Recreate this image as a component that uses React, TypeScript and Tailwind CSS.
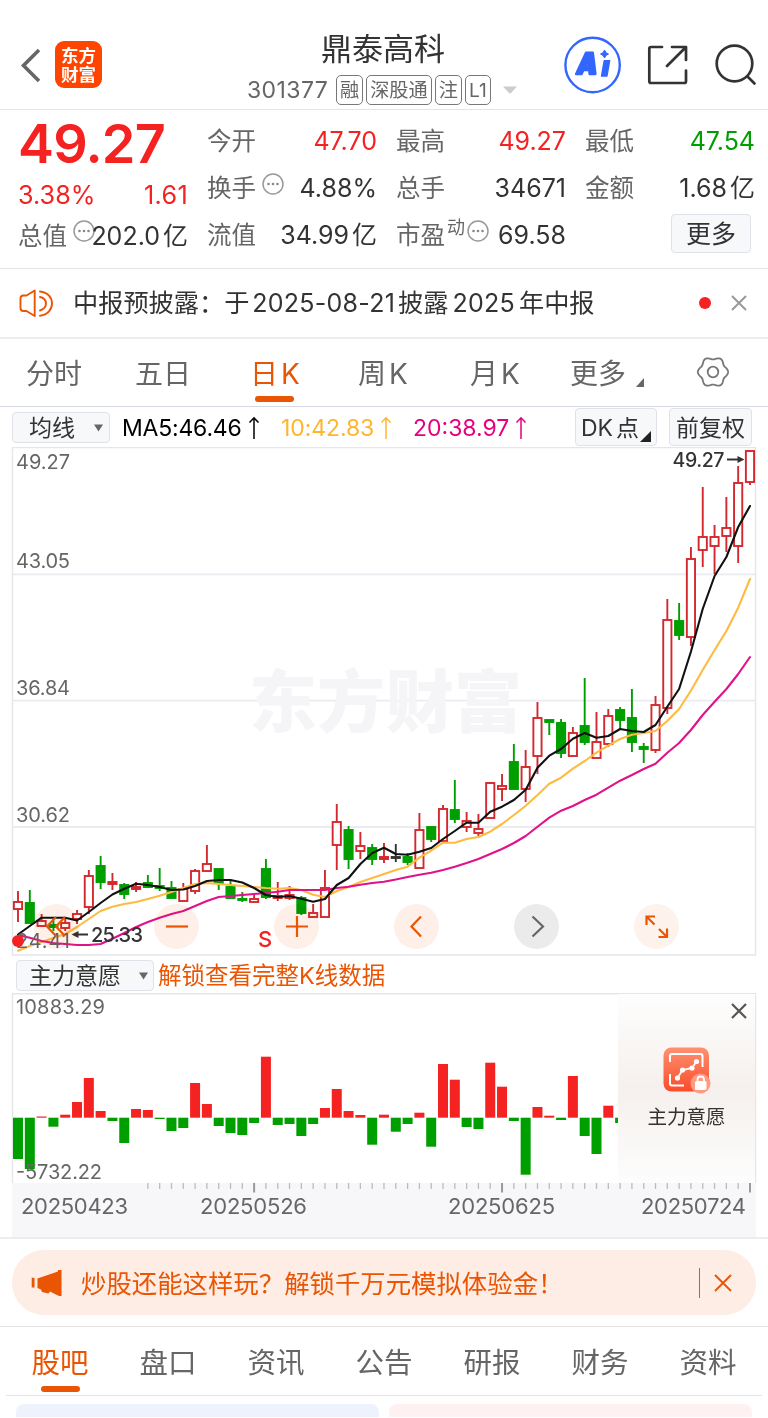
import React, { FC, ReactNode } from 'react'

// x of the first candle and distance between two candles
const X0 = 18
const STEP = 11.806
const ZERO = 1117.7

const cx = (i: number) => X0 + STEP * i

// colour, high, body top, body bottom, low
type Candle = [string, number, number, number, number]

const candles: Candle[] = [
    ['r', 891, 902, 909, 922], ['g', 890, 903, 923, 923], ['r', 914, 921, 926, 926], ['g', 919, 925, 927, 931],
    ['r', 917, 923, 928, 931], ['r', 910, 914, 919, 924], ['r', 870, 876, 907, 914], ['g', 856, 866, 882, 889],
    ['r', 873, 882, 884, 890], ['g', 883, 885, 894, 899], ['r', 882, 887, 889, 892], ['g', 875, 883, 887, 888],
    ['g', 868, 886, 888, 891], ['g', 881, 888, 898, 898], ['r', 883, 889, 901, 901], ['r', 869, 871, 891, 894],
    ['r', 845, 864, 871, 871], ['g', 869, 869, 883, 890], ['g', 881, 887, 898, 898], ['g', 892, 899, 900, 902],
    ['r', 895, 899, 902, 902], ['g', 859, 869, 897, 899], ['r', 882, 896, 898, 901], ['r', 886, 895, 898, 900],
    ['g', 896, 898, 913, 915], ['r', 904, 913, 917, 917], ['r', 870, 888, 917, 917], ['r', 804, 822, 845, 870],
    ['g', 826, 830, 859, 869], ['r', 832, 846, 851, 859], ['g', 844, 848, 859, 865], ['r', 843, 857, 859, 863],
    ['k', 844, 857, 858, 862], ['g', 853, 857, 862, 865], ['r', 813, 830, 868, 868], ['g', 827, 827, 839, 842],
    ['r', 805, 809, 841, 843], ['g', 780, 810, 819, 823], ['r', 812, 821, 827, 832], ['r', 814, 829, 833, 836],
    ['r', 782, 783, 818, 818], ['r', 774, 786, 789, 801], ['g', 744, 762, 789, 789], ['r', 750, 767, 789, 802],
    ['r', 702, 718, 756, 774], ['g', 720, 720, 722, 735], ['g', 719, 723, 753, 758], ['r', 727, 733, 756, 756],
    ['g', 678, 726, 742, 745], ['r', 712, 742, 758, 758], ['r', 709, 716, 744, 747], ['g', 707, 710, 720, 729],
    ['g', 689, 718, 742, 752], ['g', 743, 747, 749, 763], ['r', 696, 705, 750, 753], ['r', 599, 620, 708, 714],
    ['g', 603, 621, 635, 640], ['r', 547, 559, 637, 646], ['r', 487, 537, 550, 567], ['r', 525, 537, 546, 574],
    ['r', 497, 528, 536, 552], ['r', 466, 483, 546, 563], ['r', 450, 451, 482, 485],
]

const ma5 = [
    934.5, 926, 917.7, 917.7, 917.7, 920.5, 912, 903, 894.5, 888.7, 883.7, 885, 887, 890, 889.5, 886, 881, 880, 880, 882.5, 888,
    895, 897, 896, 898.7, 901.7, 899, 885, 878, 864, 853, 847.7, 854, 854.7, 851.7, 848, 839, 831, 822.7, 822.7, 811.7, 806.7,
    800, 789.7, 767.7, 755.7, 749, 738.7, 733, 737.7, 736, 729, 731, 732, 725, 706.7, 689, 651.7, 609, 576, 557, 527, 506]

const ma10 = [
    950.7, 946, 942, 938, 934, 927, 919, 911, 906.7, 904, 902, 899, 895.7, 892, 888, 884, 883, 884, 885, 886, 887,
    888, 888.7, 888, 890, 894.7, 897, 891, 887, 882, 878, 874, 870, 866.7, 857.7, 850.7, 842.7, 842.7, 839, 837, 831.7, 824,
    815, 805.7, 795, 783.7, 777.7, 768.7, 761, 752.7, 745.7, 739, 734.7, 733, 731, 721, 709, 690.7, 670, 650, 631, 607.7, 579]

const ma20 = [
    935, 937.7, 941, 943, 944, 945, 945, 944, 938.7, 933, 927, 922, 917.7, 914, 911, 906, 901, 897, 896, 895, 894,
    893, 891.7, 890, 890, 890, 890, 888, 886.7, 884.7, 883, 881.7, 879.5, 877, 874.7, 872.7, 870, 866.7, 863, 859, 854, 849,
    843, 836, 826.7, 817.7, 810.7, 806, 800, 794.7, 787.7, 780.7, 775, 769, 763.7, 752.7, 743, 730, 715, 701.7, 689, 674, 657]

// end of each volume bar, measured on the same axis as ZERO
const bars = [
    1159, 1169, 1116.5, 1126.7, 1114.7, 1102, 1078, 1111, 1121, 1143, 1109, 1110, 1119, 1131, 1128, 1083, 1104, 1126, 1133,
    1135, 1123, 1056.7, 1125, 1124, 1136, 1124, 1108, 1089, 1111, 1115, 1144.7, 1114.7, 1131.7, 1124, 1112.7, 1146.7, 1064,
    1079.7, 1127, 1129, 1062.7, 1086.7, 1121, 1174.7, 1107, 1115.7, 1120, 1076, 1136, 1154, 1105.7, 1123]

const candleColors: Record<string, string> = { r: '#d3292e', g: '#009f00', k: '#333333' }

const line = (values: number[]) => values.map((y, i) => `${cx(i).toFixed(1)},${y}`).join(' ')

const gearPath = Array.from({ length: 73 }, (_, n) => {
    const a = (n * Math.PI) / 36
    const r = 13.9 + 1.3 * Math.cos(6 * a)
    return `${n ? 'L' : 'M'}${(17 + r * Math.cos(a)).toFixed(2)} ${(17 + r * Math.sin(a)).toFixed(2)}`
}).join('')

const Dots: FC<{ className?: string }> = ({ className = '' }) => (
    <svg viewBox="0 0 22 22" className={`size-[22px] shrink-0 ${className}`}>
        <circle cx="11" cy="11" r="10" fill="none" stroke="#999" strokeWidth="1.5" />
        <circle cx="6.5" cy="11" r="1.3" fill="#888" />
        <circle cx="11" cy="11" r="1.3" fill="#888" />
        <circle cx="15.5" cy="11" r="1.3" fill="#888" />
    </svg>
)

const Tag: FC<{ children: ReactNode }> = ({ children }) => (
    <span className="flex h-[30px] items-center whitespace-nowrap rounded-[5px] border border-[#777] px-[3px] text-[19.2px] text-[#666]">{children}</span>
)

const Header: FC = () => (
    <header className="relative flex h-[110px] border-b border-[#e4e4e4]">
        <div className="flex items-start pl-[20px] pt-[41px]">
            <svg viewBox="0 0 22 40" className="mt-[4px] h-[40px] w-[22px]">
                <path d="M19 5 L3.5 20.5 L19 36" fill="none" stroke="#666" strokeWidth="3.6" />
            </svg>
            <div className="ml-[13px] flex size-[47px] flex-col items-center justify-center rounded-[9px] bg-[#ff4400] text-[17.5px] font-bold leading-[19px] text-white">
                <span>东方</span>
                <span>财富</span>
            </div>
        </div>
        <div className="absolute left-[247px] top-[29px] flex w-[275px] flex-col">
            <h1 className="pl-[74px] text-[31px] leading-[40px] text-[#333]">鼎泰高科</h1>
            <div className="mt-[6px] flex items-center gap-[3px] leading-[28px]">
                <span className="w-[86px] shrink-0 text-[23px] tracking-[0.4px] text-[#666]">301377</span>
                <Tag>融</Tag>
                <Tag>深股通</Tag>
                <Tag>注</Tag>
                <Tag>L1</Tag>
                <svg viewBox="0 0 14 8" className="ml-[9px] h-[8px] w-[14px] shrink-0"><path d="M0 0.5H14L7 8Z" fill="#ccc" /></svg>
            </div>
        </div>
        <svg viewBox="560 30 208 70" className="ml-auto mt-[30px] h-[70px] w-[208px]" fill="none">
            <circle cx="592.6" cy="65" r="27.2" stroke="#3366ff" strokeWidth="2.4" />
            <g fill="#3366ff" stroke="#3366ff" strokeLinejoin="round" fontWeight="900" transform="translate(13.2 0) skewX(-10)">
                <text x="575.5" y="74.5" strokeWidth="2.6" fontSize="29" textLength="20.5" lengthAdjust="spacingAndGlyphs">A</text>
                <text x="600.5" y="76" strokeWidth="1.6" fontSize="28" textLength="8" lengthAdjust="spacingAndGlyphs">ı</text>
            </g>
            <path d="M604.5 50Q605.3 53.2 608.500 54Q605.3 55 604.5 58Q603.7 55 600.5 54Q603.7 53.2 604.5 50Z" fill="#3366ff" stroke="#3366ff" />
            <g stroke="#333" strokeWidth="2.7" strokeLinecap="round" strokeLinejoin="round">
                <path d="M662 47H651Q649.3 47 649.3 48.7V81Q649.3 83 651 83H684.5Q686 83 686 81V70.5" />
                <path d="M672 47H686V60M667 66L685.5 47.5" />
                <circle cx="734.5" cy="63.5" r="17.8" />
                <path d="M747.5 76.5L754.5 83.5" />
            </g>
        </svg>
    </header>
)

interface QuoteProps {
    label: ReactNode
    value: string
    unit?: string
    color?: string
}

const Quote: FC<QuoteProps> = ({ label, value, unit, color = 'text-[#333]' }) => (
    <div className="flex h-[47px] items-center justify-between whitespace-nowrap pt-px">
        <span className="-mt-[2px] flex items-center text-[24.5px] text-[#666]">{label}</span>
        <span className={`text-[25px] ${color}`}>{value}{unit && <span className="ml-[3px]">{unit}</span>}</span>
    </div>
)

const Quotes: FC = () => (
    <section className="grid h-[159px] grid-cols-4 gap-x-[19px] border-b border-[#e4e4e4] pl-[18px] pr-[13px] pt-[8px]">
        <div>
            <div className="-mt-[3px] flex h-[57px] items-center text-[54px] font-semibold tracking-[-0.8px] text-[#f52222]">49.27</div>
            <div className="flex h-[46px] items-center justify-between pt-px text-[25.2px] text-[#f52222]">
                <span>3.38%</span>
                <span className="tracking-[0.3px]">1.61</span>
            </div>
            <div className="flex h-[36px] items-center whitespace-nowrap pt-px text-[24.5px] text-[#666]">
                总值<Dots className="-mt-[11px] ml-[6px] -mr-[6px]" />
                <span className="ml-auto text-[25px] text-[#333]">202.0<span className="ml-[3px]">亿</span></span>
            </div>
        </div>
        <div>
            <Quote label="今开" value="47.70" color="text-[#f52222]" />
            <Quote label={<>换手<Dots className="-mt-[9px] ml-[6px]" /></>} value="4.88%" />
            <Quote label="流值" value="34.99" unit="亿" />
        </div>
        <div>
            <Quote label="最高" value="49.27" color="text-[#f52222]" />
            <Quote label="总手" value="34671" />
            <Quote label={<>市盈<sup className="top-[-7px] ml-[2px] text-[18px]">动</sup><Dots className="-mt-[9px] ml-[2px]" /></>} value="69.58" />
        </div>
        <div>
            <Quote label="最低" value="47.54" color="text-[#009f00]" />
            <Quote label="金额" value="1.68" unit="亿" />
            <div className="ml-auto mr-[4px] mt-[2px] flex h-[39px] w-[80px] items-center justify-center rounded-[4px] border border-[#dfe2e8] bg-[#f6f8fa] pt-[2px] text-[25px] text-[#333]">更多</div>
        </div>
    </section>
)

const Notice: FC = () => (
    <section className="flex h-[70px] items-center border-b-2 border-[#ededed] pl-[19px] pr-[21px]">
        <svg viewBox="19 287 36 31" className="h-[31px] w-[36px]" fill="none" stroke="#ea5504" strokeWidth="1.9" strokeLinecap="round" strokeLinejoin="round">
            <path d="M34.7 289.5L26.5 294.5H23.5Q20.5 294.5 20.5 297.5V307Q20.5 310 23.5 310H26.5L34.7 315Z" />
            <path d="M40 296Q46 297.5 46 302.5Q46 307.5 40 309.5M40 290.5C56 292 56 313 40 314.7" />
        </svg>
        <p className="ml-[18px] whitespace-nowrap pt-px text-[25.2px] text-[#333]">
            中报预披露：于<span className="mx-[3px] text-[25px] tracking-[0.25px]">2025-08-21</span>披露<span className="mx-[4px] text-[25px] tracking-[0.25px]">2025</span>年中报
        </p>
        <span className="ml-auto size-[12px] rounded-full bg-[#f52222]" />
        <svg viewBox="0 0 16 16" className="ml-[20px] size-[16px]"><path d="M1 1L15 15M15 1L1 15" stroke="#999" strokeWidth="2" /></svg>
    </section>
)

const periods = [
    { title: '分时', left: 'ml-[26px] w-[109px]' },
    { title: '五日', left: 'w-[115px]' },
    { title: '日', suffix: 'K', left: 'w-[108px]', active: true },
    { title: '周', suffix: 'K', left: 'w-[112px]' },
    { title: '月', suffix: 'K', left: 'w-[100px]' },
    { title: '更多', left: 'w-[66px]' },
]

const PeriodTabs: FC = () => (
    <nav className="flex h-[68px] border-b border-[#d5d8e0] text-[28px] text-[#666]">
        {periods.map((item) => (
            <div key={item.title} className={`flex shrink-0 flex-col ${item.left} ${item.active ? 'text-[#ea5504]' : ''}`}>
                <span className="mt-[14px] leading-[42px]">{item.title}{item.suffix && <span className="ml-[3px]">{item.suffix}</span>}</span>
                {item.active && <span className="ml-[5px] mt-px h-[6px] w-[39px] rounded-full bg-[#ea5504]" />}
            </div>
        ))}
        <svg viewBox="0 0 8 9" className="mt-[39px] h-[9px] w-[8px]"><path d="M8 0V9H0Z" fill="#666" /></svg>
        <svg viewBox="0 0 34 34" className="ml-[52px] mt-[16px] size-[34px]" fill="none" stroke="#777" strokeWidth="1.8">
            <path d={gearPath} />
            <circle cx="17" cy="17" r="5.3" />
        </svg>
    </nav>
)

const UpArrow: FC = () => (
    <svg viewBox="0 0 12 24" className="ml-[6px] h-[24px] w-[12px]" fill="none" stroke="currentColor" strokeWidth="1.5">
        <path d="M6 23V2M1.5 6.500L6 1.8L10.5 6.500" />
    </svg>
)

const MaBar: FC = () => (
    <div className="flex h-[40px] items-center whitespace-nowrap pl-[12px] pr-[16px] text-[23px]">
        <div className="flex h-[31px] w-[98px] items-center justify-between rounded-[4px] border border-[#dfe2e8] bg-[#f6f8fa] pl-[16px] pr-[6px] pt-[2px] text-[#333]">
            均线
            <svg viewBox="0 0 10 8" className="-mt-px h-[8px] w-[9px]"><path d="M0 0H10L5 8Z" fill="#666" /></svg>
        </div>
        <span className="ml-[12px] flex w-[159px] items-center pt-[2px] tracking-[-0.2px] text-black">MA5:46.46<UpArrow /></span>
        <span className="flex w-[132px] items-center pt-[2px] tracking-[-0.1px] text-[#ffb62e]">10:42.83<UpArrow /></span>
        <span className="flex items-center pt-[2px] text-[#e4007f]">20:38.97<UpArrow /></span>
        <div className="relative ml-auto flex h-[38px] w-[82px] items-center rounded-[4px] border border-[#dfe2e8] bg-[#f6f8fa] pl-[5px] pt-[2px] text-[#333]">
            DK<span className="ml-[3px]">点</span>
            <svg viewBox="0 0 11 11" className="absolute bottom-[3px] right-[5px] size-[11px]"><path d="M11 0V11H0Z" fill="#222" /></svg>
        </div>
        <div className="ml-[12px] flex h-[38px] w-[83px] items-center justify-center rounded-[4px] border border-[#dfe2e8] bg-[#f6f8fa] pt-[2px] text-[#333]">前复权</div>
    </div>
)

const priceLabels = [
    { text: '49.27', y: 468.5 },
    { text: '43.05', y: 568 },
    { text: '36.84', y: 694.5 },
    { text: '30.62', y: 821.5 },
    { text: '24.41', y: 947.5 },
]

const controls = [
    { d: 'M22 13L13 22.5L22 32M31 13L22 22.5L31 32', box: 'bg-[#fef0e8]', color: 'text-[#ea5504]' },
    { d: 'M12 22.5H34', box: 'bg-[#fef0e8]', color: 'text-[#ea5504]' },
    { d: 'M12 22.5H34M23 12V33', box: 'bg-[#fef0e8]', color: 'text-[#ea5504]' },
    { d: 'M27 12.5L17.5 22.5L27 32.5', box: 'bg-[#fef0e8]', color: 'text-[#ea5504]' },
    { d: 'M18.5 12.5L29 22.5L18.5 32.5', box: 'bg-[#ebebeb]', color: 'text-[#666]' },
    { d: 'M12.5 21V12.5H21M12.5 12.5L20.5 20.5M33 24.5V33H24.5M33 33L25 25', box: 'bg-[#fef2ec]', color: 'text-[#ea5504]' },
]

const KLine: FC = () => (
    <section className="relative h-[509px]">
        <svg viewBox="0 447 768 509" className="h-[509px] w-[768px]">
            <path d="M12 447.5H756M12 955H756M12.5 447V955M755.5 447V955" stroke="#e4e6ea" strokeWidth="1.4" />
            <path d="M13 574.3H755M13 700.7H755M13 827H755" stroke="#ebebf2" strokeWidth="1.8" />
            <text x="249" y="727" fontSize="68" fontWeight="900" fill="#f5f5f7" textLength="273">东方财富</text>
            {candles.map(([c, high, top, bottom, low], i) => {
                const hollow = c === 'r' && bottom - top > 2
                return (
                    <g key={i} stroke={candleColors[c]} strokeWidth="1.9" fill={hollow ? '#fff' : candleColors[c]}>
                        <path d={`M${cx(i)} ${high}V${top}M${cx(i)} ${bottom}V${low}`} />
                        <rect x={cx(i) - 4.1} y={top} width="8.2" height={bottom - top} />
                    </g>
                )
            })}
            <g fill="none" strokeWidth="2.1" strokeLinejoin="round" strokeLinecap="round">
                <polyline points={line(ma10)} stroke="#fdbb3f" />
                <polyline points={line(ma20)} stroke="#e0128a" />
                <polyline points={line(ma5)} stroke="#111" />
            </g>
            {priceLabels.map((item) => (
                <text key={item.text} x="16" y={item.y} fontSize="20" fill="#666" textLength="54">{item.text}</text>
            ))}
            <circle cx="18" cy="941" r="6" fill="#f52222" />
            <text x="91" y="942" fontSize="20" fontWeight="500" fill="#333" textLength="52">25.33</text>
            <text x="672.5" y="466.5" fontSize="19.5" fontWeight="500" fill="#333" textLength="52">49.27</text>
            <path d="M75 934.5H88M727 459.5H739" stroke="#333" strokeWidth="1.8" />
            <path d="M71.5 934.5L78.5 931V938ZM744.5 459.5L737.5 456V463Z" fill="#333" />
            <text x="258" y="946.5" fontSize="22" fontWeight="500" fill="#f52222">S</text>
        </svg>
        <div className="absolute left-[34px] top-[457px] flex gap-[75px]">
            {controls.map((item, key) => (
                <div key={key} className={`relative size-[45px] ${item.color}`}>
                    <div className={`absolute inset-0 rounded-full mix-blend-multiply ${item.box}`} />
                    <svg viewBox="0 0 45 45" className="relative size-[45px]" fill="none" stroke="currentColor" strokeWidth="2.2">
                        <path d={item.d} />
                    </svg>
                </div>
            ))}
        </div>
    </section>
)

const dates = [
    { text: '20250423', x: 21 },
    { text: '20250526', x: 200 },
    { text: '20250625', x: 448 },
    { text: '20250724', x: 641 },
]

const Intent: FC = () => (
    <>
        <div className="flex h-[37px] items-center pl-[16px] pt-px text-[23px]">
            <div className="flex h-[31px] w-[138px] items-center justify-between rounded-[4px] border border-[#dfe2e8] bg-[#f6f8fa] pl-[12px] pr-[5px] pt-[2px] text-[#333]">
                主力意愿
                <svg viewBox="0 0 10 8" className="-mt-px h-[8px] w-[9px]"><path d="M0 0H10L5 8Z" fill="#666" /></svg>
            </div>
            <span className="ml-[4px] whitespace-nowrap pt-px text-[23.5px] text-[#ea5504]">解锁查看完整K线数据</span>
        </div>
        <section className="relative h-[246px] border-b-2 border-[#ededf0]">
            <svg viewBox="0 993 768 244" className="h-[244px] w-[768px]">
                <rect x="12" y="1183" width="744" height="56" fill="#f7f7fa" />
                <path d="M12 993.7H756M12.5 993V1183M755.5 993V1183" stroke="#e4e6ea" strokeWidth="1.4" fill="none" />
                {bars.map((y, i) => (
                    <rect key={i} x={cx(i) - 5} y={Math.min(y, ZERO)} width={i === 51 ? 3 : 10} height={Math.abs(y - ZERO)} fill={y < ZERO ? '#f52222' : '#009f00'} />
                ))}
                {Array.from({ length: 52 }, (_, n) => n + 11).map((i) => {
                    const major = i === 20 || i === 41 || i === 62
                    return <path key={i} d={`M${cx(i)} 1183V${major ? 1192.5 : 1189}`} stroke={major ? '#999' : '#bbb'} strokeWidth={major ? 2 : 1.3} />
                })}
                <text x="16" y="1014" fontSize="20" fill="#666" textLength="89">10883.29</text>
                <text x="16" y="1179" fontSize="20" fill="#666" textLength="86">-5732.22</text>
                {dates.map((item) => (
                    <text key={item.text} x={item.x} y="1214" fontSize="22" fill="#666" textLength={item.x === 641 ? 105 : 107}>{item.text}</text>
                ))}
            </svg>
            <div className="absolute left-[618px] top-px flex h-[189px] w-[137px] flex-col items-center bg-linear-to-b from-[#fefefe] via-[#f5f0ed] to-[#fdfdfd]">
                <svg viewBox="0 0 16 16" className="ml-[105px] mt-[9px] size-[16px]"><path d="M1 1L15 15M15 1L1 15" stroke="#555" strokeWidth="2.2" /></svg>
                <svg viewBox="0 0 50 48" className="mt-[27px] h-[48px] w-[50px]" fill="none">
                    <defs>
                        <linearGradient id="tile" x1="0" y1="0" x2="0" y2="1">
                            <stop offset="0" stopColor="#ff9070" />
                            <stop offset="1" stopColor="#f94c2c" />
                        </linearGradient>
                    </defs>
                    <rect x="1.5" y="1.5" width="45.5" height="44" rx="8" fill="url(#tile)" />
                    <path d="M8 16V10Q8 8 10 8H38.5Q40.5 8 40.5 10V21M8 28V37.5Q8 39.5 10 39.5H22" stroke="#fff" strokeWidth="2" />
                    <path d="M15.5 32L20.5 24L30 22L34.5 15.5" stroke="#fff" strokeWidth="1.8" />
                    <circle cx="15.5" cy="32" r="2.6" fill="#fff" />
                    <circle cx="20.5" cy="24" r="2.6" fill="#fff" />
                    <circle cx="30" cy="22" r="2.6" fill="#fff" />
                    <circle cx="34.5" cy="15.5" r="2.6" fill="#fff" />
                    <circle cx="38.5" cy="37.5" r="10" fill="#ff9a80" />
                    <rect x="33" y="35" width="11.5" height="9" rx="1.5" fill="#fff" />
                    <path d="M35.5 35V33.5Q35.5 30.5 38.7 30.5Q42 30.5 42 33.5V35" stroke="#fff" strokeWidth="1.8" />
                </svg>
                <span className="mt-[9px] text-[19.5px] leading-[28px] text-[#333]">主力意愿</span>
            </div>
        </section>
    </>
)

const Banner: FC = () => (
    <section className="border-b border-[#e4e4e4] px-[12px] pb-[11px] pt-[11px]">
        <div className="flex h-[65px] items-center rounded-[32px] bg-[#fdede4] pl-[19px] pr-[24px] text-[#ea5504]">
            <svg viewBox="31 1268 32 30" className="h-[30px] w-[32px]" fill="currentColor">
                <path d="M31.7 1277.7H34.5V1287.5H31.7ZM37.5 1278.5L58 1271.5V1270H61.5V1296H59L50 1291.5L48.5 1293.5L42 1292L41 1289.5L37.5 1288Z" />
            </svg>
            <p className="ml-[18px] whitespace-nowrap pt-[4px] text-[25.4px]">炒股还能这样玩？解锁千万元模拟体验金！</p>
            <span className="ml-auto h-[30px] w-px bg-[#ea5504]" />
            <svg viewBox="0 0 18 18" className="ml-[14px] size-[18px]"><path d="M1 1L17 17M17 1L1 17" stroke="currentColor" strokeWidth="1.9" /></svg>
        </div>
    </section>
)

const tabs = ['股吧', '盘口', '资讯', '公告', '研报', '财务', '资料']

const BottomTabs: FC = () => (
    <nav className="mx-[6px] flex h-[69px] border-b border-[#e4e4e4] text-[28.5px] text-[#666]">
        {tabs.map((title, key) => (
            <div key={title} className={`flex w-[108px] shrink-0 flex-col items-center ${key === 0 ? 'text-[#ea5504]' : ''}`}>
                <span className="mt-[15px] leading-[42px]">{title}</span>
                {key === 0 && <span className="mt-[2px] h-[6px] w-[39px] rounded-full bg-[#ea5504]" />}
            </div>
        ))}
    </nav>
)

const App: FC = () => (
    <div className="h-[1418px] w-[768px] overflow-hidden bg-white font-[Inter,'Noto_Sans_CJK_SC',sans-serif]">
        <Header />
        <Quotes />
        <Notice />
        <PeriodTabs />
        <MaBar />
        <KLine />
        <Intent />
        <Banner />
        <BottomTabs />
        <div className="mt-[8px] flex h-[13px] gap-[10px] overflow-hidden px-[16px]">
            <div className="h-[60px] flex-1 rounded-[8px] bg-[#edf2fc]" />
            <div className="h-[60px] flex-1 rounded-[8px] bg-[#fef1f2]" />
        </div>
    </div>
)

export default App
